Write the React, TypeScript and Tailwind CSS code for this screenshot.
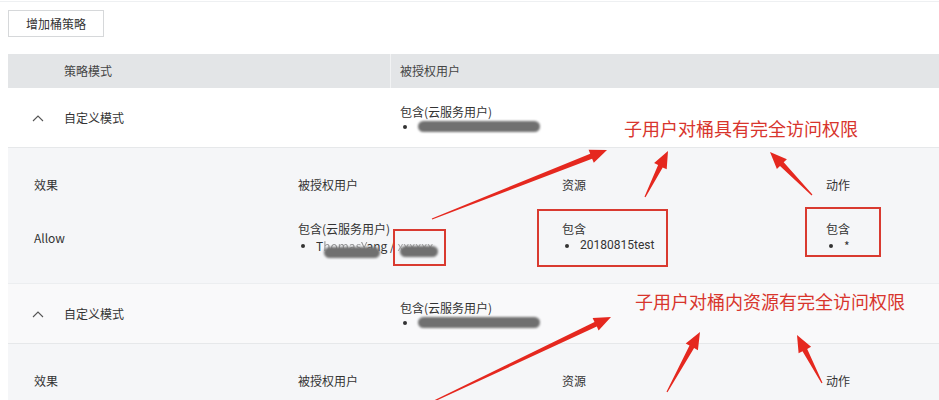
import type { ReactNode } from "react";

const FONT = { fontFamily: '"Noto Sans CJK SC", "Noto Sans", sans-serif' };

type Arrow = { x1: number; y1: number; x2: number; y2: number };

const arrows: Arrow[] = [
  { x1: 432, y1: 219, x2: 607, y2: 150 },
  { x1: 645, y1: 197, x2: 668, y2: 151 },
  { x1: 812, y1: 195, x2: 770, y2: 152 },
  { x1: 432, y1: 402, x2: 611, y2: 317 },
  { x1: 667, y1: 392, x2: 700, y2: 332 },
  { x1: 822, y1: 383, x2: 797, y2: 335 },
];

// tapering red arrow, thin at the tail, head at (x2, y2)
function arrowPoints({ x1, y1, x2, y2 }: Arrow) {
  const dx = x2 - x1;
  const dy = y2 - y1;
  const len = Math.hypot(dx, dy);
  const ux = dx / len;
  const uy = dy / len;
  const nx = -uy;
  const ny = ux;
  const headLen = 17;
  const bx = x2 - ux * headLen;
  const by = y2 - uy * headLen;
  const p = (x: number, y: number) => `${x.toFixed(1)},${y.toFixed(1)}`;
  return [
    p(x1 + nx * 0.6, y1 + ny * 0.6),
    p(bx + nx * 2.6, by + ny * 2.6),
    p(bx + nx * 7, by + ny * 7),
    p(x2, y2),
    p(bx - nx * 7, by - ny * 7),
    p(bx - nx * 2.6, by - ny * 2.6),
    p(x1 - nx * 0.6, y1 - ny * 0.6),
  ].join(" ");
}

function Blob({ w }: { w: number }) {
  return (
    <span
      className="inline-block h-[11px] rounded-full bg-[#707070] align-middle blur-[1px]"
      style={{ width: w }}
    />
  );
}

function Dot() {
  return <span className="inline-block h-[4px] w-[4px] shrink-0 rounded-full bg-[#333]" />;
}

function Chevron() {
  return (
    <svg width="12" height="8" viewBox="0 0 12 8" className="text-[#555]">
      <path d="M1 7 L6 2 L11 7" fill="none" stroke="currentColor" strokeWidth="1.1" />
    </svg>
  );
}

function PolicyRow({ last }: { last?: boolean }) {
  return (
    <div className={`flex h-[60px] items-center border-b border-[#e6e8ea] ${last ? "bg-[#f9f9fa]" : "bg-white"}`}>
      <div className="flex w-[383px] items-center">
        <div className="flex w-[56px] justify-center pl-[4px]">
          <Chevron />
        </div>
        <span>自定义模式</span>
      </div>
      <div className="flex flex-col pl-[9px] leading-[18px]">
        <span>包含(云服务用户)</span>
        <span className="flex items-center gap-[11px] pl-[3px]">
          <Dot />
          <Blob w={122} />
        </span>
      </div>
    </div>
  );
}

function Cell({ head, children }: { head: string; children: ReactNode }) {
  return (
    <div className="flex flex-col">
      <div className="h-[26px] leading-[26px]">{head}</div>
      <div className="mt-[13px] flex h-[52px] flex-col justify-center leading-[17px]">{children}</div>
    </div>
  );
}

function Bullet({ children }: { children: ReactNode }) {
  return (
    <span className="flex items-center gap-[11px] pl-[3px]">
      <Dot />
      {children}
    </span>
  );
}

function DetailPanel({ bare }: { bare?: boolean }) {
  return (
    <div className="grid h-[136px] grid-cols-[264px_264px_264px_1fr] border-b border-[#eceef0] bg-[#f5f6f8] pl-[26px] pt-[24px]">
      <Cell head="效果">{bare ? null : <span>Allow</span>}</Cell>
      <Cell head="被授权用户">
        {bare ? null : (
          <>
            <span>包含(云服务用户)</span>
            <Bullet>
              <span className="relative">
                T<span className="opacity-50">homasY</span>ang / <span className="opacity-40">xxxxxx</span>
                <span className="absolute left-[8px] top-[5px]"><Blob w={56} /></span>
                <span className="absolute left-[84px] top-[4px]"><Blob w={38} /></span>
              </span>
            </Bullet>
          </>
        )}
      </Cell>
      <Cell head="资源">
        {bare ? null : (
          <>
            <span>包含</span>
            <Bullet>
              <span style={{ fontFamily: "Roboto, sans-serif" }}>20180815test</span>
            </Bullet>
          </>
        )}
      </Cell>
      <Cell head="动作">
        {bare ? null : (
          <>
            <span>包含</span>
            <Bullet>*</Bullet>
          </>
        )}
      </Cell>
    </div>
  );
}

export default function App() {
  return (
    <div className="relative h-[400px] w-[939px] overflow-hidden bg-white text-[12px] text-[#333]" style={FONT}>
      <div className="h-[2px] border-b border-[#eef0f2]" />
      <div className="px-[8px] pt-[8px]">
        <button className="h-[27px] w-[96px] border border-[#d6d8da] bg-white text-[12px] text-[#333]">
          增加桶策略
        </button>
      </div>

      <div className="ml-[8px] mt-[17px]">
        <div className="flex h-[34px] items-center bg-[#e3e5e7] text-[#444]">
          <div className="h-full w-[383px] border-r border-[#f2f3f4] pl-[56px] leading-[34px]">策略模式</div>
          <div className="pl-[9px]">被授权用户</div>
        </div>
        <PolicyRow />
        <DetailPanel />
        <PolicyRow last />
        <DetailPanel bare />
      </div>

      {/* annotations drawn over the screenshot */}
      <div className="pointer-events-none absolute inset-0">
        <div className="absolute left-[393px] top-[229px] h-[37px] w-[53px] border-2 border-[#d93a30]" />
        <div className="absolute left-[537px] top-[209px] h-[58px] w-[131px] border-2 border-[#d93a30]" />
        <div className="absolute left-[805px] top-[207px] h-[50px] w-[76px] border-2 border-[#d93a30]" />
        <div className="absolute left-[624px] top-[116px] text-[18px] leading-[24px] text-[#d8352d]">
          子用户对桶具有完全访问权限
        </div>
        <div className="absolute left-[635px] top-[289px] text-[18px] leading-[24px] text-[#d8352d]">
          子用户对桶内资源有完全访问权限
        </div>
        <svg width="939" height="400" className="absolute left-0 top-0">
          {arrows.map((a, i) => (
            <polygon key={i} points={arrowPoints(a)} fill="#e5281f" />
          ))}
        </svg>
      </div>
    </div>
  );
}
